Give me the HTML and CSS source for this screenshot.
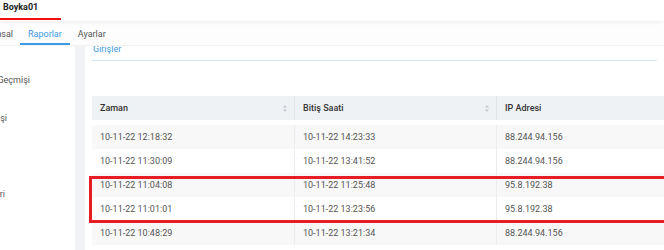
FILE: index.html
```html
<!DOCTYPE html>
<html lang="tr">
<head>
  <meta charset="UTF-8" />
  <meta name="viewport" content="width=device-width, initial-scale=1.0"/>
  <title>Girişler</title>
  <link rel="stylesheet" href="styles.css">
</head>
<body>
  <header class="topbar">
    <div class="brand">Boyka01</div>
  </header>

  <nav class="tabs">
    <div class="tab tab-cut"><span>Kurumsal</span></div>
    <div class="tab active">Raporlar</div>
    <div class="tab">Ayarlar</div>
  </nav>

  <div class="main">
    <aside class="sidebar">
      <div class="side-item"><span class="clip w30"><span>Giriş Geçmişi</span></span></div>
      <div class="side-item"><span class="clip w7"><span>Oturum Kişi</span></span></div>
      <div class="side-item"></div>
      <div class="side-item"><span class="clip w5"><span>Girişleri</span></span></div>
    </aside>

    <div class="gutter"></div>

    <section class="content">
      <div class="title">Girişler</div>

      <div class="table">
        <div class="row head">
          <div class="cell">Zaman <svg class="sort" width="4" height="7" viewBox="0 0 4 7"><path d="M2 0L4 2.6H0Z M2 7L4 4.4H0Z" fill="#c3c7cc"/></svg></div>
          <div class="cell">Bitiş Saati <svg class="sort" width="4" height="7" viewBox="0 0 4 7"><path d="M2 0L4 2.6H0Z M2 7L4 4.4H0Z" fill="#c3c7cc"/></svg></div>
          <div class="cell">IP Adresi</div>
        </div>

        <div class="body">
          <div class="row odd">
            <div class="cell">10-11-22 12:18:32</div>
            <div class="cell">10-11-22 14:23:33</div>
            <div class="cell">88.244.94.156</div>
          </div>
          <div class="row">
            <div class="cell">10-11-22 11:30:09</div>
            <div class="cell">10-11-22 13:41:52</div>
            <div class="cell">88.244.94.156</div>
          </div>
          <div class="marked">
            <div class="row odd">
              <div class="cell">10-11-22 11:04:08</div>
              <div class="cell">10-11-22 11:25:48</div>
              <div class="cell">95.8.192.38</div>
            </div>
            <div class="row">
              <div class="cell">10-11-22 11:01:01</div>
              <div class="cell">10-11-22 13:23:56</div>
              <div class="cell">95.8.192.38</div>
            </div>
          </div>
          <div class="row odd">
            <div class="cell">10-11-22 10:48:29</div>
            <div class="cell">10-11-22 13:21:34</div>
            <div class="cell">88.244.94.156</div>
          </div>
        </div>
      </div>
    </section>
  </div>
</body>
</html>
```

FILE: styles.css
```css
body {
  margin: 0;
  font-family: Roboto, "Liberation Sans", sans-serif;
  font-size: 9px;
  color: #555;
  background: #fff;
  overflow: hidden;
}
.topbar {
  height: 21px;
  background: #fff;
  box-shadow: 0 1px 4px rgba(0, 0, 0, 0.07);
  position: relative;
  z-index: 1;
}
.brand {
  width: 61px;
  height: 20px;
  box-sizing: border-box;
  padding-left: 3px;
  line-height: 14px;
  font-weight: 700;
  color: #222;
  border-bottom: 2px solid #f20d0d;
}
.tabs {
  display: flex;
  height: 25px;
  box-sizing: border-box;
  padding-top: 3px;
  background: #fdfdfd;
  border-bottom: 1px solid #f2f2f2;
}
.tab {
  height: 21px;
  box-sizing: border-box;
  padding: 2px 8px 0;
  line-height: 17px;
  color: #555;
  border-bottom: 2px solid transparent;
}
.tab.active {
  color: #3d9be6;
  border-bottom-color: #3d9be6;
}
.tab-cut {
  width: 13px;
  padding-left: 0;
  padding-right: 7px;
  display: flex;
  justify-content: flex-end;
  overflow: hidden;
  box-sizing: content-box;
}
.tab-cut span {
  white-space: nowrap;
}
.main {
  display: flex;
  height: 210px;
}
.sidebar {
  width: 75px;
  padding-top: 15px;
  background: #fff;
}
.side-item {
  height: 38px;
  line-height: 38px;
  color: #555;
}
.clip {
  display: inline-flex;
  justify-content: flex-end;
  overflow: hidden;
  white-space: nowrap;
  vertical-align: top;
}
.w30 { width: 30px; }
.w7 { width: 7px; }
.w5 { width: 5px; }
.gutter {
  width: 10px;
  background: #f0f2f5;
}
.content {
  flex: 1;
  padding: 0 7px;
  background: #fff;
  overflow: hidden;
}
.title {
  margin-top: -1px;
  padding: 0 1px 6px;
  line-height: 9px;
  color: #3d9be6;
  border-bottom: 1px solid #d3e8f7;
}
.table {
  width: 640px;
  margin-top: 35px;
}
.row {
  display: grid;
  grid-template-columns: 202px 202px 1fr;
  height: 24px;
  line-height: 24px;
}
.row .cell {
  padding: 0 8px;
  white-space: nowrap;
}
.row .cell + .cell {
  border-left: 1px solid #ececec;
}
.head {
  background: #eef2f5;
  color: #333;
  font-weight: 500;
}
.head .cell {
  display: flex;
  justify-content: space-between;
  align-items: center;
}
.head .cell + .cell {
  border-left-color: #dfe4e9;
}
.sort {
  margin-right: -1px;
}
.body {
  margin-top: 5px;
}
.odd {
  background: #f8f8f8;
}
.marked {
  position: relative;
}
.marked::after {
  content: "";
  position: absolute;
  top: 3px;
  bottom: -2px;
  left: -3px;
  right: -40px;
  border: 3px solid #e81c24;
}
```
